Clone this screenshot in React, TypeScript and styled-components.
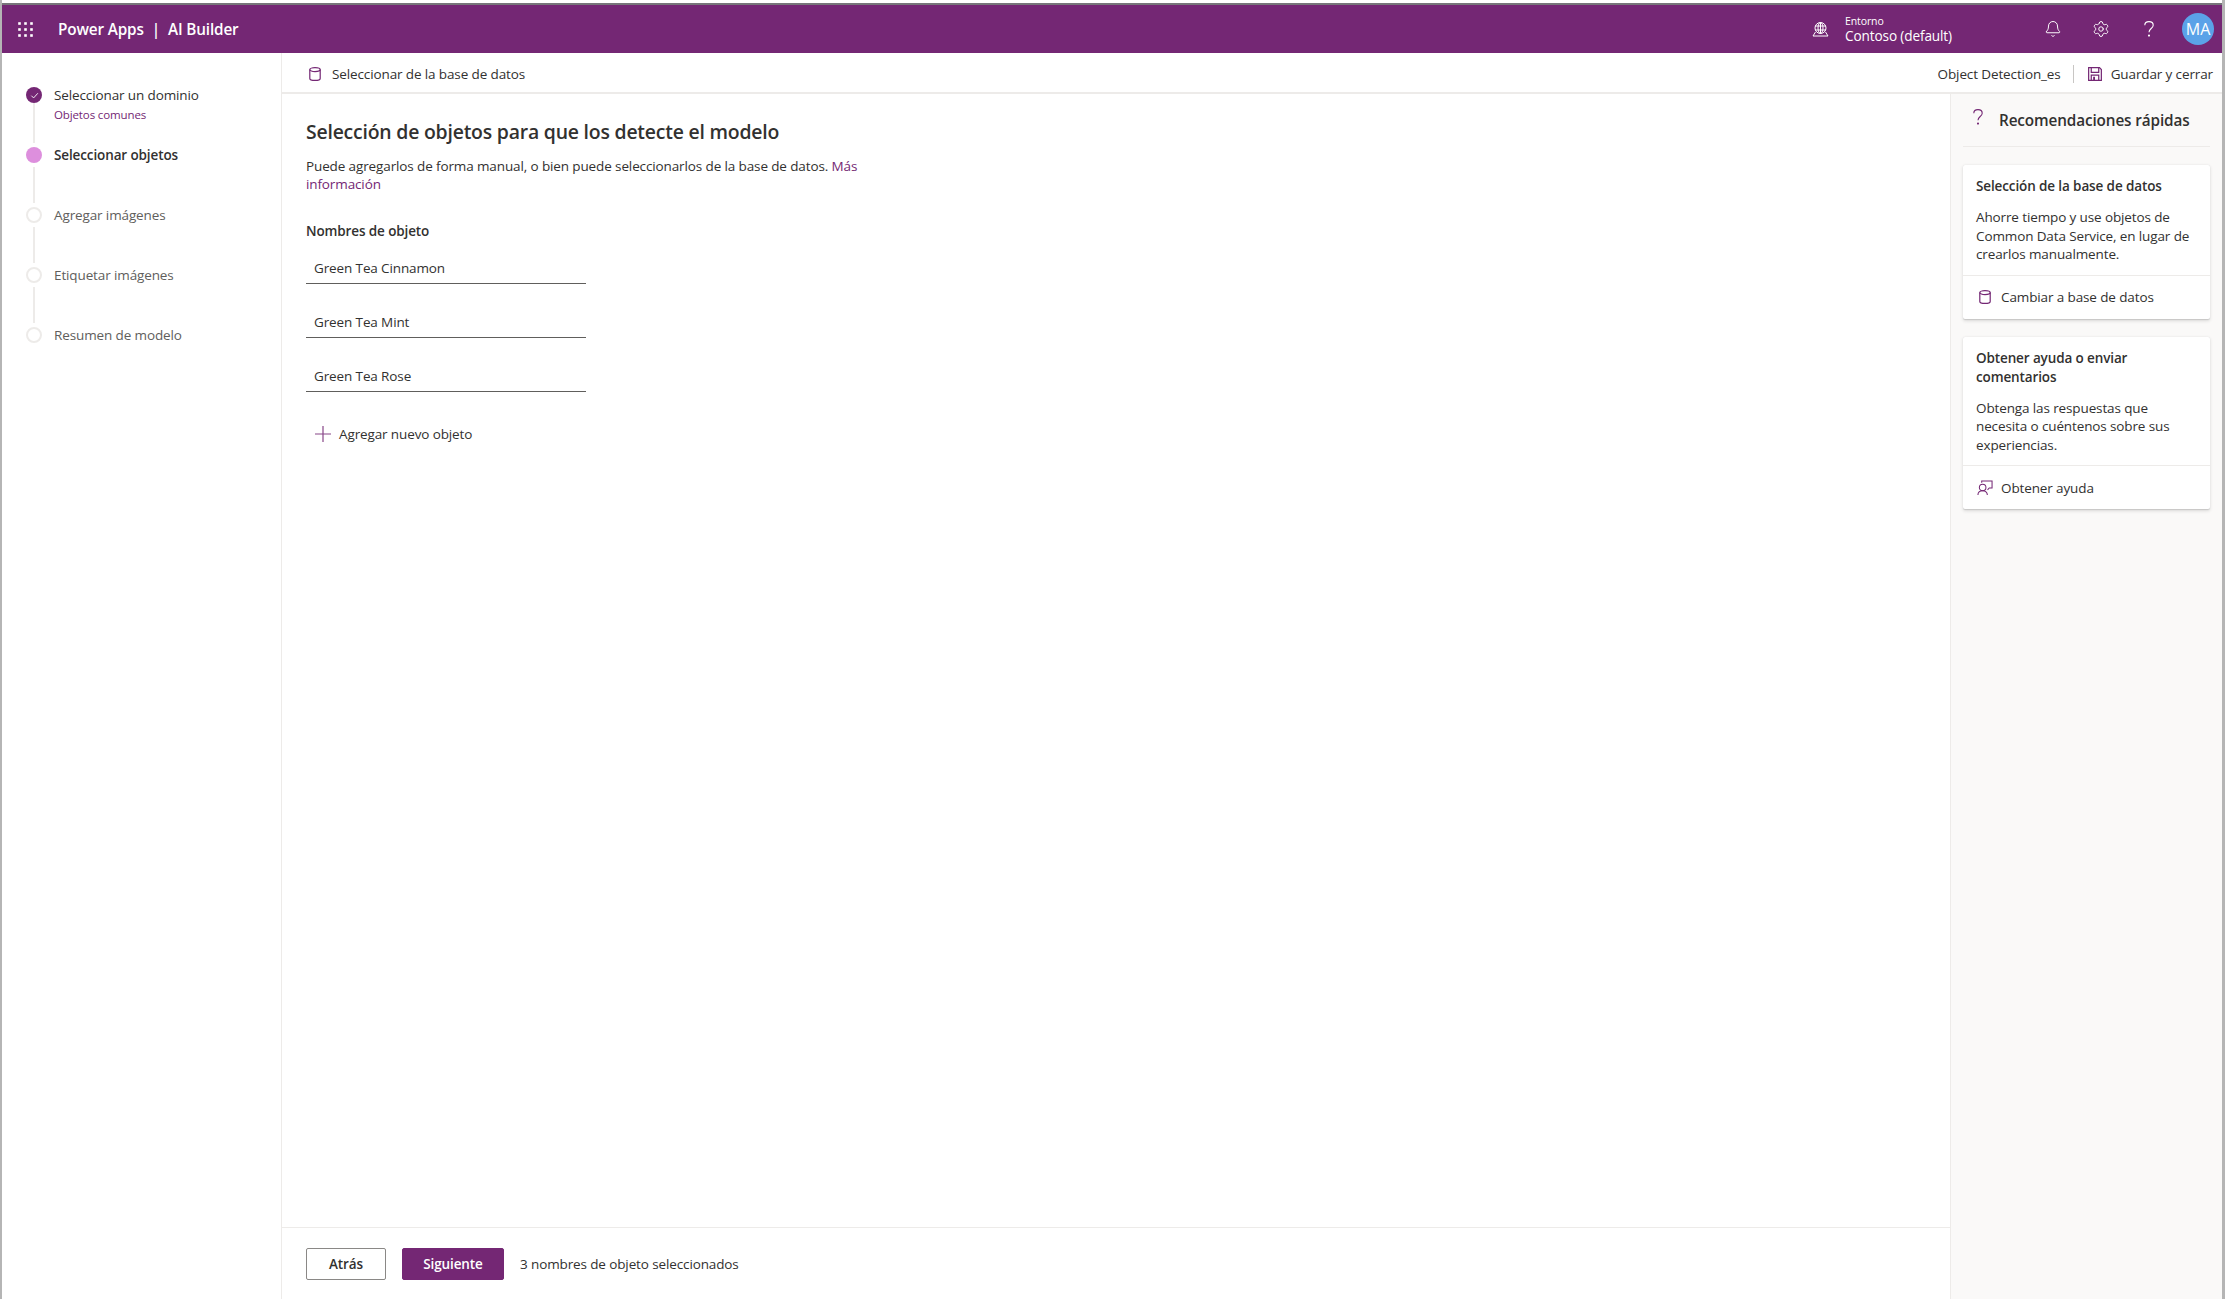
import React from 'react';
import styled, { createGlobalStyle } from 'styled-components';
import { Bell, Settings } from 'lucide-react';

const purple = '#742774';
const ink = '#323130';
const muted = '#605e5c';
const line = '#edebe9';

const GlobalStyle = createGlobalStyle`
  html, body { margin: 0; padding: 0; height: 100%; background: #fff; }
  body { font-family: "Open Sans", "Noto Sans", sans-serif; font-size: 13.5px; letter-spacing: -0.12px; color: ${ink}; overflow: hidden; }
  * { box-sizing: border-box; }
`;

const Shell = styled.div`
  display: flex;
  flex-direction: column;
  height: 1299px;
  padding-top: 3px;
  border-left: 2px solid #b5b5b5;
  border-right: 3px solid #b5b5b5;
`;

const Header = styled.header`
  height: 50px;
  flex: none;
  background: ${purple};
  border-top: 2px solid #77757a;
  color: #fff;
  display: flex;
  align-items: center;
  padding: 0 8px 0 16px;
`;

const Waffle = styled.svg`
  width: 15px;
  height: 15px;
  fill: #fff;
  flex: none;
  margin-right: 25px;
`;

const Brand = styled.div`
  font-size: 15.3px;
  font-weight: 600;
  letter-spacing: -0.15px;
  display: flex;
  gap: 8px;
`;

const HeaderRight = styled.div`
  margin-left: auto;
  display: flex;
  align-items: center;
`;

const Env = styled.div`
  display: flex;
  align-items: center;
  gap: 16px;
  margin-right: 77px;
`;

const EnvText = styled.div`
  display: flex;
  flex-direction: column;
  line-height: 16px;
  font-size: 13.6px;
  small {
    font-size: 10.5px;
    line-height: 14px;
  }
`;

const HeaderIcon = styled.span`
  width: 48px;
  display: flex;
  justify-content: center;
  align-items: center;
`;

const Avatar = styled.div`
  width: 32px;
  height: 32px;
  border-radius: 50%;
  background: #5ba2e8;
  color: #fff;
  font-size: 16px;
  display: flex;
  align-items: center;
  justify-content: center;
  margin-left: 9px;
`;

const Body = styled.div`
  flex: 1;
  display: flex;
  min-height: 0;
`;

const Sidebar = styled.nav`
  width: 280px;
  flex: none;
  border-right: 1px solid ${line};
  padding: 34px 0 0 24px;
`;

const Step = styled.div`
  display: flex;
  gap: 12px;
  height: 60px;
`;

const Track = styled.div`
  width: 16px;
  flex: none;
  display: flex;
  flex-direction: column;
  align-items: center;
`;

const Dot = styled.span<{ $state: 'done' | 'current' | 'todo' }>`
  width: 16px;
  height: 16px;
  flex: none;
  border-radius: 50%;
  display: flex;
  align-items: center;
  justify-content: center;
  background: ${(p) => (p.$state === 'done' ? purple : p.$state === 'current' ? '#dd8fdd' : '#fff')};
  border: ${(p) => (p.$state === 'todo' ? `2px solid ${line}` : 'none')};
`;

const Connector = styled.span<{ $long?: boolean }>`
  width: 2px;
  height: ${(p) => (p.$long ? '40px' : '36px')};
  margin-top: ${(p) => (p.$long ? '0' : '4px')};
  background: ${line};
`;

const StepLabel = styled.div<{ $state: 'done' | 'current' | 'todo' }>`
  line-height: 16px;
  font-weight: ${(p) => (p.$state === 'current' ? 600 : 400)};
  color: ${(p) => (p.$state === 'todo' ? muted : ink)};
`;

const StepSub = styled.div`
  font-size: 11.5px;
  line-height: 14px;
  margin-top: 5px;
  color: ${purple};
`;

const Content = styled.div`
  flex: 1;
  min-width: 0;
  display: flex;
  flex-direction: column;
`;

const Toolbar = styled.div`
  height: 41px;
  flex: none;
  border-bottom: 2px solid ${line};
  display: flex;
  align-items: center;
  padding: 2px 9px 0 27px;
`;

const ToolButton = styled.div<{ $gap: number }>`
  display: flex;
  align-items: center;
  gap: ${(p) => p.$gap}px;
`;

const ToolRight = styled.div`
  margin-left: auto;
  display: flex;
  align-items: center;
`;

const ToolDivider = styled.span`
  width: 1px;
  height: 18px;
  background: #c8c6c4;
  margin: 0 14px 0 12px;
`;

const Columns = styled.div`
  flex: 1;
  display: flex;
  min-height: 0;
`;

const Main = styled.main`
  flex: 1;
  min-width: 0;
  display: flex;
  flex-direction: column;
`;

const Form = styled.div`
  flex: 1;
  padding: 24px 0 0 24px;
`;

const Title = styled.h1`
  margin: 0;
  font-size: 19.4px;
  line-height: 28px;
  font-weight: 600;
  letter-spacing: -0.2px;
`;

const Intro = styled.p`
  margin: 11px 0 0;
  width: 570px;
  line-height: 18px;
`;

const Link = styled.span`
  color: ${purple};
`;

const FieldLabel = styled.div`
  margin-top: 29px;
  line-height: 18px;
  font-weight: 600;
`;

const Fields = styled.div`
  margin-top: 6px;
  display: flex;
  flex-direction: column;
  gap: 16px;
`;

const Field = styled.div`
  width: 280px;
  height: 38px;
  padding: 7px 8px 0;
  display: flex;
  align-items: center;
  border-bottom: 1px solid #605e5c;
`;

const AddRow = styled.div`
  margin: 32px 0 0 9px;
  display: flex;
  align-items: center;
  gap: 8px;
  line-height: 20px;
`;

const Footer = styled.footer`
  height: 72px;
  flex: none;
  border-top: 1px solid ${line};
  display: flex;
  align-items: center;
  padding-left: 24px;
`;

const Button = styled.button<{ $primary?: boolean }>`
  height: 32px;
  width: ${(p) => (p.$primary ? '102px' : '80px')};
  margin-right: 16px;
  padding: 1px 0 0;
  border-radius: 2px;
  border: 1px solid ${(p) => (p.$primary ? purple : '#8a8886')};
  background: ${(p) => (p.$primary ? purple : '#fff')};
  color: ${(p) => (p.$primary ? '#fff' : ink)};
  font: 600 13.5px "Open Sans", sans-serif;
  letter-spacing: -0.12px;
`;

const FooterNote = styled.span`
  padding-top: 1px;
`;

const Tips = styled.aside`
  width: 272px;
  flex: none;
  background: #faf9f8;
  border-left: 1px solid ${line};
  padding: 0 12px;
`;

const TipsHeader = styled.div`
  height: 53px;
  display: flex;
  align-items: center;
  border-bottom: 1px solid ${line};
  font-size: 15.3px;
  font-weight: 600;
  gap: 16px;
  padding-left: 10px;
`;

const TipsIcon = styled.span`
  display: flex;
  margin-bottom: 6px;
`;

const Card = styled.section`
  margin-top: 18px;
  width: 247px;
  background: #fff;
  box-shadow: 0 1.6px 3.6px rgba(0, 0, 0, 0.13), 0 0.3px 0.9px rgba(0, 0, 0, 0.11);
  border-radius: 2px;
`;

const CardBody = styled.div`
  padding: 12px 15px 11px 13px;
  border-bottom: 1px solid ${line};
`;

const CardTitle = styled.h2`
  margin: 0 0 12px;
  font-size: 13.5px;
  line-height: 19px;
  font-weight: 600;
`;

const CardText = styled.p`
  margin: 0;
  line-height: 18.5px;
`;

const CardAction = styled.div`
  height: 43px;
  display: flex;
  align-items: center;
  gap: 8px;
  padding-left: 14px;
`;

const ActionIcon = styled.span`
  width: 16px;
  display: flex;
  justify-content: center;
`;

const Database = () => (
  <svg width="12" height="14" viewBox="0 0 12 14" fill="none" stroke={purple} strokeWidth="1.2">
    <path d="M.8 2.6v8.8c0 1.1 2.3 2 5.2 2s5.2-.9 5.2-2V2.6" />
    <ellipse cx="6" cy="2.6" rx="5.2" ry="2" />
  </svg>
);

const Save = () => (
  <svg width="14" height="14" viewBox="0 0 15 15" fill="none" stroke={purple} strokeWidth="1.3">
    <path d="M.7.7h11.6l2 2v11.6H.7z" />
    <path d="M3.5.7v5h8v-5M3.5 14.3V8.8h8v5.5" />
    <path d="M5.5 10.5h2v3.8h-2z" fill={purple} stroke="none" />
  </svg>
);

const Globe = () => (
  <svg width="17" height="16" viewBox="0 0 17 16" fill="none" stroke="#fff" strokeWidth="1">
    <circle cx="8.5" cy="7" r="5.5" />
    <ellipse cx="8.5" cy="7" rx="2.5" ry="5.5" />
    <path d="M3 5h11M3 9h11M8.5 1.5v11" />
    <path d="M3.5 11 1 15h15l-2.5-4" />
  </svg>
);

const Help = ({ color }: { color: string }) => (
  <svg width="10" height="16" viewBox="0 0 10 16" fill="none" stroke={color} strokeWidth="1.1">
    <path d="M.8 4.2C.8 2.2 2.6.6 5 .6s4.2 1.6 4.2 3.6c0 3.3-4.2 3.3-4.2 7" />
    <circle cx="5" cy="14.6" r=".5" fill={color} />
  </svg>
);

const Feedback = () => (
  <svg width="17" height="16" viewBox="0 0 17 16" fill="none" stroke={purple} strokeWidth="1.1">
    <circle cx="6" cy="7.5" r="3.5" />
    <path d="M1 15.5c0-3 2.2-4.5 5-4.5s5 1.5 5 4.5" />
    <path d="M5 2.5V.6h11v7.4h-3l-1.8 2" />
  </svg>
);

const AddIcon = () => (
  <svg width="16" height="16" viewBox="0 0 16 16" fill="none" stroke={purple} strokeWidth="1.2" opacity="0.85">
    <path d="M8 0v16M0 8h16" />
  </svg>
);

const Check = () => (
  <svg width="9" height="9" viewBox="0 0 10 10" fill="none" stroke="#fff" strokeWidth="1">
    <path d="M1.5 5.2 4 7.7 8.7 2.5" />
  </svg>
);

const steps = [
  { label: 'Seleccionar un dominio', sub: 'Objetos comunes', state: 'done' as const },
  { label: 'Seleccionar objetos', state: 'current' as const },
  { label: 'Agregar imágenes', state: 'todo' as const },
  { label: 'Etiquetar imágenes', state: 'todo' as const },
  { label: 'Resumen de modelo', state: 'todo' as const },
];

const objectNames = ['Green Tea Cinnamon', 'Green Tea Mint', 'Green Tea Rose'];

const App = () => {
  return (
    <>
      <GlobalStyle />
      <Shell>
        <Header>
          <Waffle viewBox="0 0 15 15">
            {[1.5, 7.5, 13.5].flatMap((y) =>
              [1.5, 7.5, 13.5].map((x) => <rect key={`${x}-${y}`} x={x - 1.3} y={y - 1.3} width="2.6" height="2.6" />),
            )}
          </Waffle>
          <Brand>
            <span>Power Apps</span>
            <span>|</span>
            <span>AI Builder</span>
          </Brand>
          <HeaderRight>
            <Env>
              <Globe />
              <EnvText>
                <small>Entorno</small>
                <span>Contoso (default)</span>
              </EnvText>
            </Env>
            <HeaderIcon>
              <Bell size={18} strokeWidth={1.3} />
            </HeaderIcon>
            <HeaderIcon>
              <Settings size={18} strokeWidth={1.3} />
            </HeaderIcon>
            <HeaderIcon>
              <Help color="#fff" />
            </HeaderIcon>
            <Avatar>MA</Avatar>
          </HeaderRight>
        </Header>
        <Body>
          <Sidebar>
            {steps.map((s, i) => (
              <Step key={s.label}>
                <Track>
                  <Dot $state={s.state}>{s.state === 'done' && <Check />}</Dot>
                  {i < steps.length - 1 && <Connector $long={i === 0} />}
                </Track>
                <div>
                  <StepLabel $state={s.state}>{s.label}</StepLabel>
                  {s.sub && <StepSub>{s.sub}</StepSub>}
                </div>
              </Step>
            ))}
          </Sidebar>
          <Content>
            <Toolbar>
              <ToolButton $gap={11}>
                <Database />
                <span>Seleccionar de la base de datos</span>
              </ToolButton>
              <ToolRight>
                <span>Object Detection_es</span>
                <ToolDivider />
                <ToolButton $gap={9}>
                  <Save />
                  <span>Guardar y cerrar</span>
                </ToolButton>
              </ToolRight>
            </Toolbar>
            <Columns>
              <Main>
                <Form>
                  <Title>Selección de objetos para que los detecte el modelo</Title>
                  <Intro>
                    Puede agregarlos de forma manual, o bien puede seleccionarlos de la base de datos.{' '}
                    <Link>Más información</Link>
                  </Intro>
                  <FieldLabel>Nombres de objeto</FieldLabel>
                  <Fields>
                    {objectNames.map((name) => (
                      <Field key={name}>{name}</Field>
                    ))}
                  </Fields>
                  <AddRow>
                    <AddIcon />
                    <span>Agregar nuevo objeto</span>
                  </AddRow>
                </Form>
                <Footer>
                  <Button>Atrás</Button>
                  <Button $primary>Siguiente</Button>
                  <FooterNote>3 nombres de objeto seleccionados</FooterNote>
                </Footer>
              </Main>
              <Tips>
                <TipsHeader>
                  <TipsIcon>
                    <Help color={purple} />
                  </TipsIcon>
                  <span>Recomendaciones rápidas</span>
                </TipsHeader>
                <Card>
                  <CardBody>
                    <CardTitle>Selección de la base de datos</CardTitle>
                    <CardText>Ahorre tiempo y use objetos de Common Data Service, en lugar de crearlos manualmente.</CardText>
                  </CardBody>
                  <CardAction>
                    <ActionIcon>
                      <Database />
                    </ActionIcon>
                    <span>Cambiar a base de datos</span>
                  </CardAction>
                </Card>
                <Card>
                  <CardBody>
                    <CardTitle>Obtener ayuda o enviar comentarios</CardTitle>
                    <CardText>Obtenga las respuestas que necesita o cuéntenos sobre sus experiencias.</CardText>
                  </CardBody>
                  <CardAction>
                    <ActionIcon>
                      <Feedback />
                    </ActionIcon>
                    <span>Obtener ayuda</span>
                  </CardAction>
                </Card>
              </Tips>
            </Columns>
          </Content>
        </Body>
      </Shell>
    </>
  );
};

export default App;
